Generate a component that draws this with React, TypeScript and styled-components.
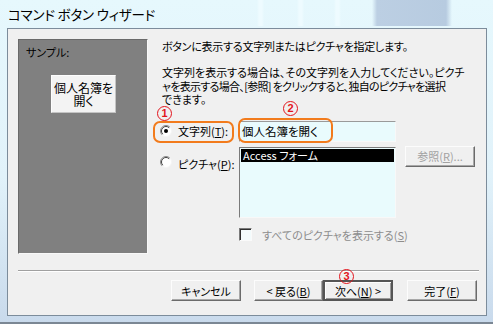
import React from "react";
import styled, { createGlobalStyle, css } from "styled-components";

const GlobalStyle = createGlobalStyle`
  html, body { margin: 0; padding: 0; background: #e6f8fd; }
  body {
    font-family: "Noto Sans CJK JP", "Noto Sans", sans-serif;
    font-size: 11px;
    color: #000;
    font-feature-settings: "palt";
  }
`;

const Window = styled.div`
  position: relative;
  width: 493px;
  height: 324px;
  box-sizing: border-box;
  display: flex;
  flex-direction: column;
  overflow: hidden;
  background: linear-gradient(180deg, #e6f8fd 0%, #e1f2fa 55%, #c9daec 100%);
  border-bottom: 2px solid #7b8794;
`;

const TitleBar = styled.div`
  height: 28px;
  flex: none;
  display: flex;
  align-items: center;
  padding-left: 8px;
  font-size: 13.5px;
  letter-spacing: -0.2px;
  background:
    linear-gradient(90deg, transparent 372px, #bccfe3 377px, #b7cbe0 446px, transparent 452px) 0 0 / 100% 26px no-repeat,
    linear-gradient(90deg, transparent 257px, #eefbff 259px, #eefbff 262px, transparent 264px,
      transparent 297px, #eefbff 299px, #eefbff 302px, transparent 304px,
      transparent 334px, #eefbff 336px, #eefbff 339px, transparent 341px) 0 0 / 100% 26px no-repeat;
`;

const Client = styled.div`
  flex: 1;
  margin: 0 6px 6px 7px;
  border: 1px solid #7c8c9b;
  background: #f0f0f0;
  padding: 10px 7px 0 10px;
  display: flex;
  flex-direction: column;
`;

const MainRow = styled.div`
  display: flex;
  gap: 12px;
`;

const SamplePanel = styled.div`
  width: 130px;
  height: 215px;
  box-sizing: border-box;
  flex: none;
  background: #808080;
  border: 1px solid;
  border-color: #6a6a6a #f8f8f8 #f8f8f8 #6a6a6a;
  padding: 5px 0 0 7px;
`;

const SampleLabel = styled.div`
  line-height: 14px;
`;

const SampleButton = styled.div`
  width: 65px;
  height: 38px;
  box-sizing: border-box;
  margin: 16px 0 0 25px;
  background: #f3f3f3;
  border: 1px solid;
  border-color: #fdfdfd #c4c4c4 #c4c4c4 #fdfdfd;
  display: flex;
  flex-direction: column;
  align-items: center;
  justify-content: center;
  line-height: 13.5px;
  font-size: 12px;
`;

const RightCol = styled.div`
  flex: 1;
  display: flex;
  flex-direction: column;
`;

const Heading = styled.div`
  margin-left: 2px;
  line-height: 14px;
  letter-spacing: -0.25px;
  white-space: nowrap;
`;

const Para = styled.div`
  margin: 13px 0 0 2px;
  line-height: 13.5px;
  white-space: nowrap;
`;

const ParaLine = styled.div<{ $tight?: number }>`
  letter-spacing: ${(p) => p.$tight ?? 0}px;
`;

const OptionsGrid = styled.div`
  margin-top: 14px;
  display: grid;
  grid-template-columns: 79px 157px 79px;
  grid-template-rows: 21px 71px 20px;
  row-gap: 5px;
`;

const RadioLabel = styled.label<{ $top?: number }>`
  position: relative;
  display: flex;
  align-items: ${(p) => (p.$top ? "flex-start" : "center")};
  padding-top: ${(p) => p.$top ?? 0}px;
  gap: 6px;
  white-space: nowrap;
`;

const U = styled.span`
  text-decoration: underline;
  text-underline-offset: 1px;
`;

const Ring = styled.div<{ $l: number; $t: number; $w: number; $h: number }>`
  position: absolute;
  left: ${(p) => p.$l}px;
  top: ${(p) => p.$t}px;
  width: ${(p) => p.$w}px;
  height: ${(p) => p.$h}px;
  box-sizing: border-box;
  border: 2px solid #f27b1c;
  border-radius: 7px;
  pointer-events: none;
`;

const Marker = styled.span<{ $l: number; $t: number }>`
  position: absolute;
  left: ${(p) => p.$l}px;
  top: ${(p) => p.$t}px;
  width: 15px;
  height: 15px;
  box-sizing: border-box;
  border: 1.6px solid #e3141c;
  border-radius: 50%;
  display: flex;
  align-items: center;
  justify-content: center;
  font-family: "Liberation Sans", Arial, sans-serif;
  font-size: 11px;
  font-weight: bold;
  line-height: 1;
  color: #e3141c;
  pointer-events: none;
`;

const sunken = css`
  box-sizing: border-box;
  border: 1px solid;
  border-color: #9a9a9a #f8f8f8 #f8f8f8 #9a9a9a;
  background: #e9fbfd;
`;

const TextBox = styled.div`
  ${sunken};
  position: relative;
  display: flex;
  align-items: center;
  padding-left: 2px;
  font-size: 11.5px;
`;

const ListBox = styled.div`
  ${sunken};
  border-color: #7a7a7a #f8f8f8 #f8f8f8 #7a7a7a;
  padding: 1px;
`;

const ListItem = styled.div<{ $selected?: boolean }>`
  height: 13px;
  line-height: 13px;
  padding-left: 2px;
  background: ${(p) => (p.$selected ? "#000" : "transparent")};
  color: ${(p) => (p.$selected ? "#fff" : "#000")};
  white-space: nowrap;
`;

const Button = styled.button<{ $default?: boolean; $w?: number }>`
  position: relative;
  width: ${(p) => p.$w ?? 70}px;
  height: 21px;
  box-sizing: border-box;
  padding: 0;
  font: inherit;
  font-feature-settings: "palt";
  color: #000;
  background: #f0f0f0;
  border: 1px solid;
  border-color: #fcfcfc #6b6b6b #6b6b6b #fcfcfc;
  box-shadow: inset -1px -1px 0 #a8a8a8;
  display: flex;
  align-items: center;
  justify-content: center;
  white-space: nowrap;
  ${(p) =>
    p.$default &&
    css`
      border: 2px solid #555;
      box-shadow: inset 1px 1px 0 #fdfdfd, inset -1px -1px 0 #9a9a9a;
    `}
  &:disabled {
    color: #a2a2a2;
  }
`;

const BrowseButton = styled(Button)`
  justify-self: end;
  align-self: start;
  margin-top: -1px;
`;

const CheckRow = styled.div`
  grid-column: 2 / 4;
  display: flex;
  align-items: center;
  gap: 10px;
  margin-top: 4px;
  color: #8d8d8d;
  white-space: nowrap;
`;

const CheckBox = styled.span`
  width: 13px;
  height: 13px;
  box-sizing: border-box;
  flex: none;
  border: 1px solid;
  border-color: #7a7a7a #fafafa #fafafa #7a7a7a;
  box-shadow: inset 1px 1px 0 #303030;
  background: #f3fbfc;
`;

const Separator = styled.div`
  margin-top: 16px;
  height: 0;
  border-top: 1px solid #a0a0a0;
  border-bottom: 1px solid #ffffff;
`;

const ButtonRow = styled.div`
  margin-top: 8px;
  padding-right: 2px;
  display: flex;
  justify-content: flex-end;
`;

const Spacer = styled.div<{ $w: number }>`
  width: ${(p) => p.$w}px;
  flex: none;
`;

function Radio({ checked }: { checked?: boolean }) {
  return (
    <svg width="12" height="12" viewBox="0 0 12 12" style={{ flex: "none" }}>
      <circle cx="6" cy="6" r="5.5" fill="#ffffff" />
      <path d="M9.9 2.1 A5.5 5.5 0 0 0 2.1 9.9" stroke="#8a8a8a" fill="none" />
      <path d="M9.2 2.8 A4.5 4.5 0 0 0 2.8 9.2" stroke="#404040" fill="none" />
      <path d="M2.1 9.9 A5.5 5.5 0 0 0 9.9 2.1" stroke="#f4f4f4" fill="none" />
      {checked && <circle cx="6" cy="6" r="2" fill="#000" />}
    </svg>
  );
}

export default function App() {
  return (
    <>
      <GlobalStyle />
      <Window>
        <TitleBar>コマンド ボタン ウィザード</TitleBar>
        <Client>
          <MainRow>
            <SamplePanel>
              <SampleLabel>サンプル:</SampleLabel>
              <SampleButton>
                <span>個人名簿を</span>
                <span>開く</span>
              </SampleButton>
            </SamplePanel>
            <RightCol>
              <Heading>ボタンに表示する文字列またはピクチャを指定します。</Heading>
              <Para>
                <ParaLine>文字列を表示する場合は、その文字列を入力してください。ピクチ</ParaLine>
                <ParaLine $tight={-0.7}>ャを表示する場合、[参照] をクリックすると、独自のピクチャを選択</ParaLine>
                <ParaLine>できます。</ParaLine>
              </Para>
              <OptionsGrid>
                <RadioLabel>
                  <Radio checked />
                  <span>
                    文字列(<U>T</U>):
                  </span>
                  <Ring $l={-7} $t={0} $w={81} $h={22} />
                  <Marker $l={-3} $t={-15}>1</Marker>
                </RadioLabel>
                <TextBox>
                  個人名簿を開く
                  <Ring $l={-2} $t={-4} $w={95} $h={25} />
                  <Marker $l={43} $t={-21}>2</Marker>
                </TextBox>
                <div />
                <RadioLabel $top={9}>
                  <Radio />
                  <span>
                    ピクチャ(<U>P</U>):
                  </span>
                </RadioLabel>
                <ListBox>
                  <ListItem $selected>Access フォーム</ListItem>
                </ListBox>
                <BrowseButton disabled>
                  参照(<U>R</U>)...
                </BrowseButton>
                <CheckRow>
                  <CheckBox />
                  <span>
                    すべてのピクチャを表示する(<U>S</U>)
                  </span>
                </CheckRow>
              </OptionsGrid>
            </RightCol>
          </MainRow>
          <Separator />
          <ButtonRow>
            <Button>キャンセル</Button>
            <Spacer $w={13} />
            <Button $w={69}>
              &lt; 戻る(<U>B</U>)
            </Button>
            <Button $default>
              次へ(<U>N</U>) &gt;
              <Marker $l={14} $t={-13}>3</Marker>
            </Button>
            <Spacer $w={14} />
            <Button>
              完了(<U>F</U>)
            </Button>
          </ButtonRow>
        </Client>
      </Window>
    </>
  );
}
